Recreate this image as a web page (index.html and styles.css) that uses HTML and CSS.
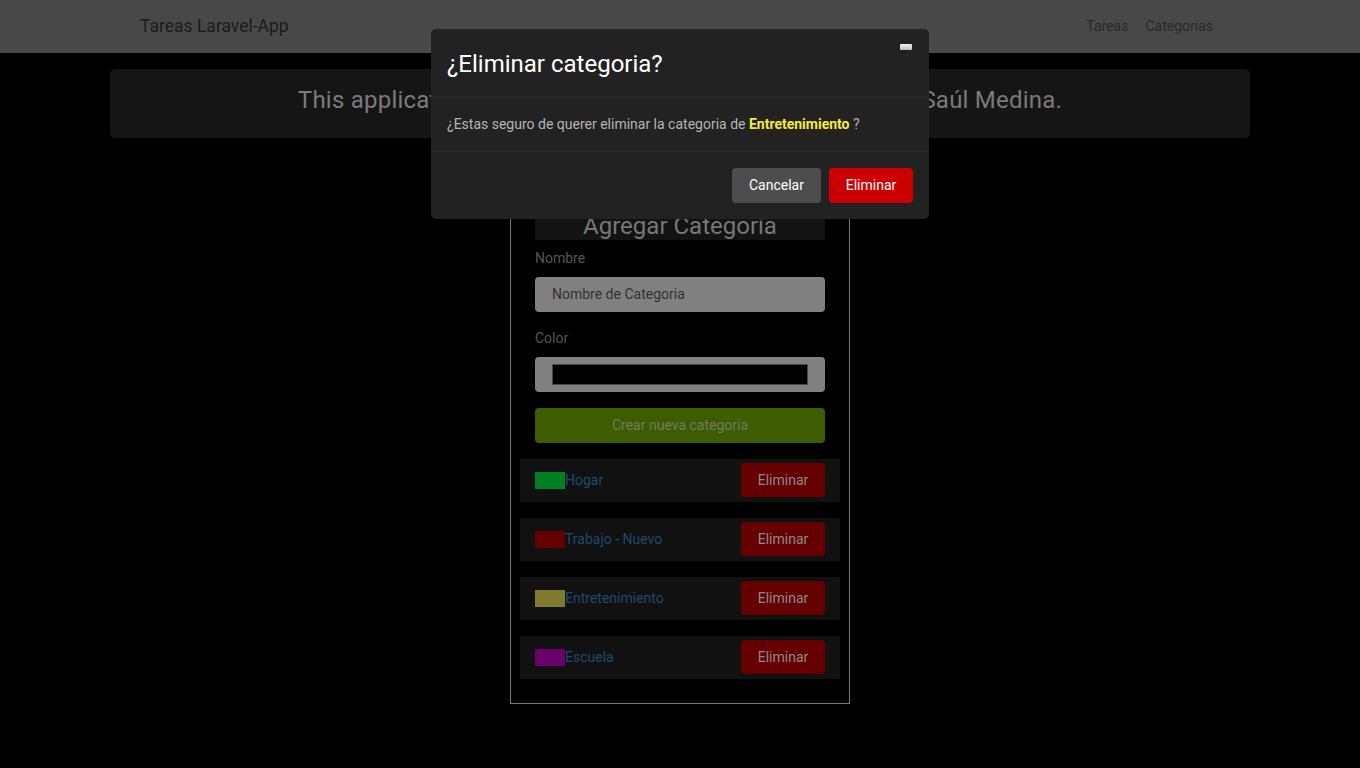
FILE: index.html
```html
<!DOCTYPE html>
<html lang="es">
<head>
<meta charset="utf-8">
<title>Tareas Laravel-App</title>
<link rel="stylesheet" href="styles.css">
</head>
<body>
<nav class="navbar">
  <div class="container nav-inner">
    <span class="brand">Tareas Laravel-App</span>
    <div class="nav-links">
      <span class="nav-link">Tareas</span>
      <span class="nav-link">Categorias</span>
    </div>
  </div>
</nav>
<main class="container">
  <div class="jumbo">This application has been developed using Laravel 5.8 by Saúl Medina.</div>
  <section class="card">
    <h2 class="card-title">Agregar Categoria</h2>
    <label class="label">Nombre</label>
    <div class="input"><span class="placeholder">Nombre de Categoria</span></div>
    <label class="label">Color</label>
    <div class="input color-input"><span class="color-box"></span></div>
    <div class="btn-create">Crear nueva categoria</div>
    <ul class="list">
      <li class="item"><span class="name"><span class="swatch sw-green"></span>Hogar</span><span class="btn-del">Eliminar</span></li>
      <li class="item"><span class="name"><span class="swatch sw-red"></span>Trabajo - Nuevo</span><span class="btn-del">Eliminar</span></li>
      <li class="item"><span class="name"><span class="swatch sw-olive"></span>Entretenimiento</span><span class="btn-del">Eliminar</span></li>
      <li class="item"><span class="name"><span class="swatch sw-purple"></span>Escuela</span><span class="btn-del">Eliminar</span></li>
    </ul>
  </section>
</main>

<div class="modal">
  <div class="modal-header">
    <h5 class="modal-title">¿Eliminar categoria?</h5>
    <span class="close"></span>
  </div>
  <div class="modal-body">¿Estas seguro de querer eliminar la categoria de <strong class="hl">Entretenimiento</strong> ?</div>
  <div class="modal-footer">
    <span class="mbtn mbtn-gray">Cancelar</span>
    <span class="mbtn mbtn-red">Eliminar</span>
  </div>
</div>
</body>
</html>
```
FILE: styles.css
```css
* { box-sizing: border-box; }
html, body { margin: 0; padding: 0; }
body {
  background: #000;
  font-family: Roboto, "Liberation Sans", sans-serif;
  font-size: 14px;
  line-height: 1.5;
  color: #777;
  height: 768px;
  overflow: hidden;
}
.container { width: 1140px; margin: 0 auto; }
.navbar { background: #484848; height: 53px; }
.nav-inner {
  height: 53px;
  padding: 0 37px 0 30px;
  display: flex;
  align-items: center;
  justify-content: space-between;
}
.brand { font-size: 17.5px; color: #1b1b1b; }
.nav-links { display: flex; gap: 17px; }
.nav-link { color: #2a2a2a; font-size: 14px; }

.jumbo {
  margin-top: 16px;
  background: #151515;
  border-radius: 5px;
  padding: 13px 16px 16px;
  height: 69px;
  text-align: center;
  font-size: 24px;
  line-height: 36px;
  letter-spacing: 0.23px;
  color: #7a7a7a;
  white-space: nowrap;
}
.card {
  width: 340px;
  margin: 16px auto 0;
  border: 1px solid #7a7a7a;
  padding: 24px 24px 24px;
  display: flex;
  flex-direction: column;
}
.card-title {
  margin: 0;
  padding-top: 33px;
  background: #131313;
  font-size: 24px;
  font-weight: 400;
  line-height: 28px;
  text-align: center;
  color: #777;
}
.label { margin: 8px 0 8px; color: #555; line-height: 21px; }
.label + .input { margin-bottom: 16px; }
.input {
  height: 35px;
  background: #808080;
  border-radius: 4px;
  display: flex;
  align-items: center;
  padding: 0 17px;
}
.input + .label { margin-top: 0; }
.placeholder { color: #333; }
.color-box {
  display: block;
  width: 256px;
  height: 21px;
  background: #000;
  border: 1px solid #4a4a4a;
}
.btn-create {
  height: 35px;
  background: #3e5c00;
  border-radius: 4px;
  color: #707a66;
  display: flex;
  align-items: center;
  justify-content: center;
}
.list {
  list-style: none;
  margin: 16px -15px 0;
  padding: 0;
  display: flex;
  flex-direction: column;
  gap: 16px;
}
.item {
  height: 43px;
  background: #111;
  padding: 0 15px;
  display: flex;
  align-items: center;
  justify-content: space-between;
}
.name { display: flex; align-items: center; color: #1d4a6b; }
.swatch { display: inline-block; width: 30px; height: 17px; }
.sw-green { background: #008020; }
.sw-red { background: #660000; }
.sw-olive { background: #7f7a2d; }
.sw-purple { background: #6a006a; }
.btn-del {
  width: 84px;
  height: 34px;
  background: #660000;
  border-radius: 4px;
  color: #8a8a8a;
  display: flex;
  align-items: center;
  justify-content: center;
  margin-top: -1px;
}

.modal {
  position: absolute;
  top: 29px;
  left: 431px;
  width: 498px;
  background: #222;
  border-radius: 5px;
}
.modal-header {
  position: relative;
  padding: 17px 16px 15px;
  border-bottom: 1px solid #2c2c2c;
}
.modal-title {
  margin: 0;
  font-size: 24px;
  font-weight: 400;
  line-height: 36px;
  color: #fff;
}
.close {
  position: absolute;
  top: 15px;
  right: 17px;
  width: 12px;
  height: 6px;
  background: linear-gradient(#f4f4f4, #bdbdbd);
  border-radius: 1px;
}
.modal-body {
  padding: 16px;
  line-height: 21px;
  color: #b4b4b4;
  border-bottom: 1px solid #2c2c2c;
}
.hl { color: #f8ea3e; font-weight: 700; }
.modal-footer {
  padding: 16px;
  display: flex;
  justify-content: flex-end;
  gap: 8px;
}
.mbtn {
  height: 35px;
  border-radius: 4px;
  color: #fff;
  display: flex;
  align-items: center;
  justify-content: center;
}
.mbtn-gray { background: #4d4d4d; width: 89px; }
.mbtn-red { background: #cc0000; width: 84px; }
```
